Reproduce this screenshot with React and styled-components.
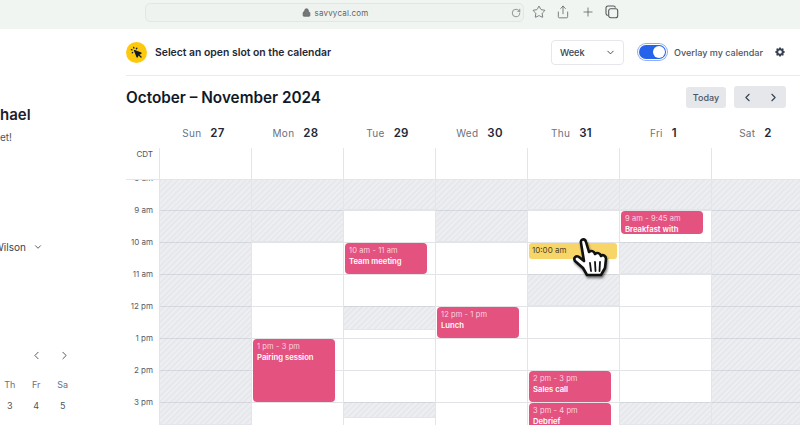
import React from "react";
import styled, { createGlobalStyle } from "styled-components";
import {
  ChevronDown,
  ChevronLeft,
  ChevronRight,
  Lock,
  Plus,
  RotateCw,
  Share,
  Star,
} from "lucide-react";
import { HiCog, HiCursorClick } from "react-icons/hi";

const GlobalStyle = createGlobalStyle`
  html, body {
    margin: 0;
    padding: 0;
    background: #fff;
  }
  * {
    box-sizing: border-box;
  }
`;

const Page = styled.div`
  width: 800px;
  height: 425px;
  overflow: hidden;
  font-family: Inter, "Liberation Sans", sans-serif;
  color: #1f2937;
  background: #fff;
`;

const BrowserBar = styled.div`
  position: relative;
  height: 29px;
  background: #f1f5f2;
  display: flex;
  align-items: flex-start;
  padding: 3px 0 0 145px;
`;

const AddressBar = styled.div`
  width: 379px;
  height: 19px;
  border: 1px solid #e2e7e3;
  border-radius: 5px;
  background: #eff3f0;
  display: flex;
  align-items: center;
  justify-content: center;
  gap: 3px;
  padding-left: 2px;
  font-size: 8px;
  letter-spacing: 0.2px;
  color: #5f6563;
`;

const Reload = styled.span`
  position: absolute;
  left: 511px;
  top: 8px;
  display: flex;
  color: #7d8381;
`;

const BrowserTools = styled.div`
  display: flex;
  align-items: center;
  gap: 10.3px;
  margin-left: 8px;
  height: 18px;
  color: #55595a;
`;

const TabsIcon = () => (
  <svg width="14" height="14" viewBox="0 0 14 14" fill="none" stroke="currentColor" strokeWidth="1.1">
    <rect x="3.7" y="3.7" width="9" height="9" rx="2" />
    <path d="M2.8 10.4A2 2 0 0 1 1 8.5V3A2 2 0 0 1 3 1h5.5a2 2 0 0 1 1.9 1.7" />
  </svg>
);

const Body = styled.div`
  display: flex;
`;

const Sidebar = styled.aside`
  width: 126px;
  flex: none;
  padding-top: 75px;
  overflow: hidden;
`;

const Name = styled.div`
  font-size: 15px;
  line-height: 22px;
  font-weight: 600;
  color: #1a202c;
`;

const Greeting = styled.div`
  margin-top: 3px;
  font-size: 10px;
  line-height: 16px;
  color: #4b5563;
`;

const Host = styled.div`
  margin: 94px 0 0 -6px;
  display: flex;
  align-items: center;
  gap: 7px;
  font-size: 10px;
  line-height: 16px;
  color: #374151;
`;

const MiniNav = styled.div`
  margin-top: 94px;
  display: flex;
  gap: 15px;
  padding-left: 29.5px;
  color: #374151;
`;

const MiniGrid = styled.div`
  margin: 12px 0 0 -3.5px;
  display: grid;
  grid-template-columns: repeat(3, 26.5px);
  grid-auto-rows: 21px;
  align-items: center;
  justify-items: center;
  font-size: 9px;
  color: #6b7280;
`;

const MiniDate = styled.span`
  color: #4b5563;
`;

const Main = styled.main`
  flex: 1;
  min-width: 0;
`;

const Toolbar = styled.div`
  height: 47px;
  border-bottom: 1px solid #e8eaed;
  padding-right: 14px;
  display: flex;
  align-items: center;
`;

const SlotBadge = styled.span`
  width: 21px;
  height: 21px;
  border-radius: 50%;
  background: #fdc90e;
  color: #111827;
  display: flex;
  align-items: center;
  justify-content: center;
`;

const Prompt = styled.div`
  margin-left: 8px;
  font-size: 10.4px;
  font-weight: 600;
  color: #1f2937;
  flex: 1;
`;

const ViewSelect = styled.div`
  width: 73px;
  height: 25px;
  border: 1px solid #e5e7eb;
  border-radius: 4px;
  padding: 0 7px 0 8px;
  display: flex;
  align-items: center;
  justify-content: space-between;
  font-size: 9.2px;
  font-weight: 500;
  color: #374151;
`;

const Toggle = styled.span`
  margin-left: 15px;
  width: 27px;
  height: 14px;
  border-radius: 7px;
  background: #2563eb;
  box-shadow: 0 0 0 1px #fff, 0 0 0 2px #93aef0;
  display: flex;
  align-items: center;
  justify-content: flex-end;
  padding-right: 1px;
`;

const ToggleKnob = styled.span`
  width: 12px;
  height: 12px;
  border-radius: 50%;
  background: #fff;
`;

const OverlayLabel = styled.span`
  margin-left: 8px;
  font-size: 9.05px;
  font-weight: 500;
  color: #4b5563;
`;

const Gear = styled.span`
  margin-left: 11px;
  display: flex;
  color: #374151;
`;

const TitleRow = styled.div`
  height: 42px;
  padding-right: 14px;
  display: flex;
  align-items: center;
  justify-content: space-between;
`;

const Title = styled.h1`
  margin: 0;
  font-size: 15.3px;
  font-weight: 600;
  color: #111827;
`;

const TitleActions = styled.div`
  display: flex;
  align-items: center;
  gap: 8px;
`;

const TodayButton = styled.div`
  width: 40px;
  height: 21px;
  border-radius: 3px;
  background: #e5e7eb;
  display: flex;
  align-items: center;
  justify-content: center;
  font-size: 9px;
  font-weight: 500;
  color: #4b5563;
`;

const PageButtons = styled.div`
  width: 52px;
  height: 22px;
  border-radius: 3px;
  background: #e5e7eb;
  display: flex;
  align-items: center;
  justify-content: space-around;
  color: #374151;
`;

const Calendar = styled.div`
  display: grid;
  grid-template-columns: 33px repeat(7, 92px);
  grid-template-rows: 30px 32px 245px;
`;

const DayHead = styled.div`
  display: flex;
  align-items: center;
  justify-content: center;
  gap: 9px;
  padding-right: 3px;
  font-size: 10px;
  letter-spacing: 0.3px;
  color: #6b7280;
`;

const DayNumber = styled.span`
  font-size: 11.5px;
  font-weight: 600;
  color: #1f2937;
`;

const ZoneCell = styled.div`
  padding: 1px 6px 0 0;
  text-align: right;
  font-size: 8px;
  line-height: 10px;
  color: #4b5563;
  border-bottom: 1px solid #e3e5e9;
`;

const AllDayCell = styled.div`
  border-left: 1px solid #e3e5e9;
  border-bottom: 1px solid #e3e5e9;
`;

const TimeColumn = styled.div`
  overflow: hidden;
`;

const TimeLabel = styled.div`
  height: 32px;
  padding-right: 6px;
  display: flex;
  align-items: center;
  justify-content: flex-end;
  font-size: 8px;
  color: #555c68;
  white-space: nowrap;
  &:first-child {
    margin-top: -18px;
  }
`;

const DayColumn = styled.div`
  position: relative;
  border-left: 1px solid #e3e5e9;
  display: flex;
  flex-direction: column;
  &::after {
    content: "";
    position: absolute;
    inset: 0;
    background-image: linear-gradient(rgba(170, 175, 185, 0.35) 1px, transparent 1px);
    background-size: 100% 32px;
    background-position: 0 -2px;
    pointer-events: none;
  }
`;

const Slot = styled.div`
  flex: none;
  height: ${(p) => p.$height}px;
  background: ${(p) =>
    p.$busy
      ? "repeating-linear-gradient(135deg, #e6e8ec 0 2px, #eceef1 2px 4px)"
      : "#fff"};
  background-attachment: fixed;
  box-shadow: ${(p) => (p.$busy ? "inset 0 -1px 0 #e3e5e9" : "none")};
`;

const Event = styled.div`
  position: absolute;
  z-index: 1;
  left: 1px;
  top: ${(p) => p.$top}px;
  width: 82px;
  height: ${(p) => p.$height}px;
  border-radius: 4px;
  background: #e4527f;
  padding: 2px 4px;
  overflow: hidden;
  white-space: nowrap;
`;

const EventTime = styled.div`
  font-size: 7.5px;
  line-height: 11px;
  letter-spacing: 0.1px;
  color: #fbd5e1;
`;

const EventTitle = styled.div`
  font-size: 7.7px;
  line-height: 11px;
  font-weight: 600;
  color: #fff;
`;

const PickedSlot = styled.div`
  position: absolute;
  z-index: 1;
  left: 1px;
  top: 63px;
  width: 88px;
  height: 16px;
  border-radius: 3px;
  background: #f8d569;
  padding: 0 3px;
  font-size: 8px;
  line-height: 15px;
  color: #4d4522;
`;

const HandCursor = styled.svg`
  position: absolute;
  z-index: 2;
  left: 42px;
  top: 54px;
  filter: drop-shadow(1px 2px 1px rgba(0, 0, 0, 0.5));
`;

const days = [
  { name: "Sun", date: 27, slots: [[245, true]] },
  {
    name: "Mon",
    date: 28,
    slots: [[62, true]],
    events: [{ top: 159, height: 63, time: "1 pm - 3 pm", title: "Pairing session" }],
  },
  {
    name: "Tue",
    date: 29,
    slots: [[30, true], [96, false], [24, true], [72, false], [16, true]],
    events: [{ top: 63, height: 31, time: "10 am - 11 am", title: "Team meeting" }],
  },
  {
    name: "Wed",
    date: 30,
    slots: [[62, true]],
    events: [{ top: 127, height: 31, time: "12 pm - 1 pm", title: "Lunch" }],
  },
  {
    name: "Thu",
    date: 31,
    slots: [[30, true], [64, false], [32, true]],
    picked: true,
    events: [
      { top: 191, height: 31, time: "2 pm - 3 pm", title: "Sales call" },
      { top: 223, height: 31, time: "3 pm - 4 pm", title: "Debrief" },
    ],
  },
  {
    name: "Fri",
    date: 1,
    slots: [[30, true], [32, false], [32, true], [128, false], [23, true]],
    events: [{ top: 31, height: 23, time: "9 am - 9:45 am", title: "Breakfast with" }],
  },
  { name: "Sat", date: 2, slots: [[245, true]] },
];

const hours = ["8 am", "9 am", "10 am", "11 am", "12 pm", "1 pm", "2 pm", "3 pm"];

export default function App() {
  return (
    <Page>
      <GlobalStyle />
      <BrowserBar>
        <AddressBar>
          <Lock size={9} fill="#777" strokeWidth={2} />
          savvycal.com
        </AddressBar>
        <Reload>
          <RotateCw size={10} />
        </Reload>
        <BrowserTools>
          <Star size={14} strokeWidth={1.3} />
          <Share size={14} strokeWidth={1.3} />
          <Plus size={14} strokeWidth={1.3} />
          <TabsIcon />
        </BrowserTools>
      </BrowserBar>
      <Body>
        <Sidebar>
          <Name>hael</Name>
          <Greeting>et!</Greeting>
          <Host>
            Wilson
            <ChevronDown size={10} strokeWidth={2} />
          </Host>
          <MiniNav>
            <ChevronLeft size={13} strokeWidth={1.6} />
            <ChevronRight size={13} strokeWidth={1.6} />
          </MiniNav>
          <MiniGrid>
            <span>Th</span>
            <span>Fr</span>
            <span>Sa</span>
            <MiniDate>3</MiniDate>
            <MiniDate>4</MiniDate>
            <MiniDate>5</MiniDate>
          </MiniGrid>
        </Sidebar>
        <Main>
          <Toolbar>
            <SlotBadge>
              <HiCursorClick size={13} />
            </SlotBadge>
            <Prompt>Select an open slot on the calendar</Prompt>
            <ViewSelect>
              Week
              <ChevronDown size={11} />
            </ViewSelect>
            <Toggle>
              <ToggleKnob />
            </Toggle>
            <OverlayLabel>Overlay my calendar</OverlayLabel>
            <Gear>
              <HiCog size={12} />
            </Gear>
          </Toolbar>
          <TitleRow>
            <Title>October – November 2024</Title>
            <TitleActions>
              <TodayButton>Today</TodayButton>
              <PageButtons>
                <ChevronLeft size={13} strokeWidth={2} />
                <ChevronRight size={13} strokeWidth={2} />
              </PageButtons>
            </TitleActions>
          </TitleRow>
          <Calendar>
            <div />
            {days.map((d) => (
              <DayHead key={d.name}>
                {d.name}
                <DayNumber>{d.date}</DayNumber>
              </DayHead>
            ))}
            <ZoneCell>CDT</ZoneCell>
            {days.map((d) => (
              <AllDayCell key={d.name} />
            ))}
            <TimeColumn>
              {hours.map((h) => (
                <TimeLabel key={h}>{h}</TimeLabel>
              ))}
            </TimeColumn>
            {days.map((d) => (
              <DayColumn key={d.name}>
                {d.slots.map(([height, busy], i) => (
                  <Slot key={i} $height={height} $busy={busy} />
                ))}
                {d.events?.map((e) => (
                  <Event key={e.title} $top={e.top} $height={e.height}>
                    <EventTime>{e.time}</EventTime>
                    <EventTitle>{e.title}</EventTitle>
                  </Event>
                ))}
                {d.picked && (
                  <>
                    <PickedSlot>10:00 am</PickedSlot>
                    <HandCursor width="40" height="46" viewBox="0 0 40 46">
                      <path
                        d="M11 9C10 5 15 4 16 8L19 18C21 16 24 17 25 20C27 18 30 19 31 22C33 20 36 22 36 25L35 34L31 41L17 41L13 34L5 27C3 24 6 21 9 23L14 27Z"
                        fill="#fff"
                        stroke="#111"
                        strokeWidth="2.6"
                        strokeLinejoin="round"
                      />
                      <path d="M20 29L21 37M25 28L25.5 37M30 28L29.5 37" stroke="#111" strokeWidth="1.8" strokeLinecap="round" />
                    </HandCursor>
                  </>
                )}
              </DayColumn>
            ))}
          </Calendar>
        </Main>
      </Body>
    </Page>
  );
}
